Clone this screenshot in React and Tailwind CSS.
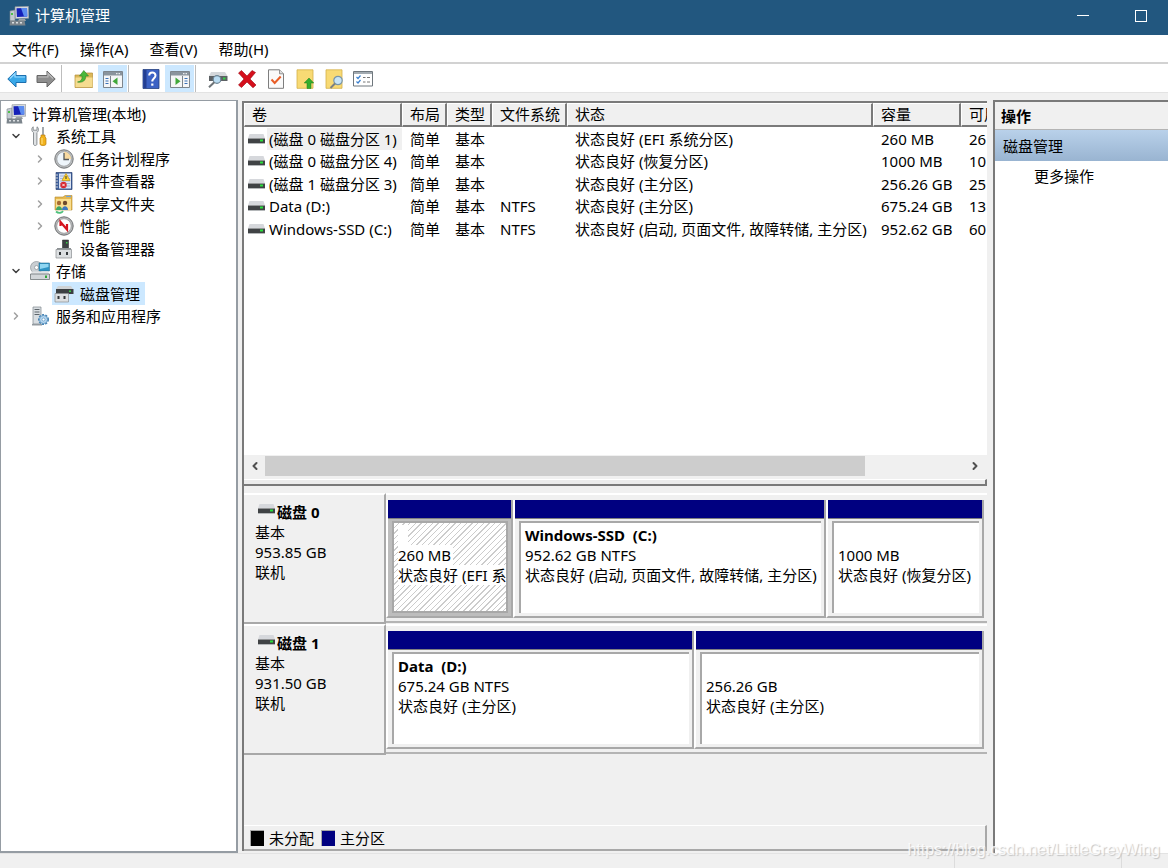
import React from 'react'
import clsx from 'clsx'
import { ChevronDown, ChevronLeft, ChevronRight } from 'lucide-react'

const ComputerIcon = ({ className }) => (
  <svg viewBox="0 0 20 20" className={className} aria-hidden="true">
    <path d="M1 5l5-1v11H1z" fill="#c3cad0" stroke="#7d868e" strokeWidth=".6" />
    <path d="M2 7h2v2H2z" fill="#4dc04a" />
    <path d="M6 0.8l13.5-.6.3 12-13.5.6z" fill="#d5dade" stroke="#848c94" strokeWidth=".6" />
    <path d="M7.5 2.3l10.5-.4.3 8.5-10.4.6z" fill="#1420b8" />
    <path d="M12 2.1l6-.2.3 8.5-3.3.2z" fill="#5b8cf0" />
    <path d="M10 13h6l1 2H9z" fill="#9aa2a8" />
    <path d="M1 14.5h14.5l1 5H.5z" fill="#7c858c" />
    <path d="M3 16h2v1.6H3zM7 16h2v1.6H7zM11 16h2v1.6h-2z" fill="#d9dde0" />
  </svg>
)

const ToolsIcon = ({ className }) => (
  <svg viewBox="0 0 20 20" className={className} aria-hidden="true">
    <path
      d="M3.2.8C1.3 2 1.2 5 3.5 6.6V18c0 2 3.4 2 3.4 0V6.6C9 5 9 2 7 .8V4.2H3.2z"
      fill="#dfe2e4"
      stroke="#80868a"
      strokeWidth=".9"
    />
    <path d="M12 1h2v8h-2z" fill="#a3a8ac" />
    <path d="M11 9h4v2l1 1v6c0 2-6 2-6 0v-6l1-1z" fill="#f2b31c" stroke="#b97d10" strokeWidth=".7" />
    <path d="M12 12v6" stroke="#ffe28a" />
  </svg>
)

const ClockIcon = ({ className }) => (
  <svg viewBox="0 0 20 20" className={className} aria-hidden="true">
    <circle cx="10" cy="10" r="9.2" fill="#b9bcbe" stroke="#77797b" />
    <circle cx="10" cy="10" r="7.2" fill="#eef5fb" stroke="#8d8f91" strokeWidth=".6" />
    <path d="M10 10V2.8A7.2 7.2 0 0 1 17.2 10z" fill="#f7d9a0" />
    <path d="M10 4v6.5h5" fill="none" stroke="#54585b" strokeWidth="1.3" />
  </svg>
)

const EventIcon = ({ className }) => (
  <svg viewBox="0 0 20 20" className={className} aria-hidden="true">
    <path d="M2 1.5h16v17H2z" fill="#3d5f9c" stroke="#2b4272" strokeWidth=".7" />
    <path d="M5 2.5h12v15H5z" fill="#dbe4f4" />
    <path d="M6 5h10M6 7.5h10M6 10h10M6 12.5h10M6 15h10" stroke="#8ea5cf" strokeWidth=".7" />
    <path d="M1 4h3M1 7h3M1 10h3M1 13h3M1 16h3" stroke="#d0d4da" />
    <path d="M12 2.5l4 7H8z" fill="#ffd52d" stroke="#c69410" strokeWidth=".7" />
    <path d="M12 5v3" stroke="#333" />
    <circle cx="9.5" cy="14" r="3.2" fill="#d8262f" />
    <path d="M8.3 12.8l2.4 2.4m0-2.4l-2.4 2.4" stroke="#fff" strokeWidth=".9" />
  </svg>
)

const SharedIcon = ({ className }) => (
  <svg viewBox="0 0 20 20" className={className} aria-hidden="true">
    <path d="M1 3h8l2-1.5h7V16H1z" fill="#e6b84e" stroke="#b48a2f" strokeWidth=".6" />
    <path d="M2 5h15v11H2z" fill="#f9de8f" />
    <path d="M12 2.5h5" stroke="#6ea5dd" strokeWidth="1.2" />
    <circle cx="5" cy="9" r="2.2" fill="#a66b32" />
    <circle cx="11" cy="9" r="2.2" fill="#6d4a2b" />
    <path d="M2 16c0-5 6-5 6 0z" fill="#3fa665" />
    <path d="M8 16c0-5 6-5 6 0z" fill="#3c78c0" />
    <path d="M2 17.5c3 2.5 6 1 7-.5" fill="none" stroke="#4fc07c" strokeWidth="1.8" />
  </svg>
)

const PerformanceIcon = ({ className }) => (
  <svg viewBox="0 0 20 20" className={className} aria-hidden="true">
    <circle cx="10" cy="10" r="9.2" fill="#b5b7b8" stroke="#707274" />
    <circle cx="10" cy="10" r="7.2" fill="#fff" stroke="#8d8f91" strokeWidth=".6" />
    <path d="M6.5 10V6l6.500 7.500V8" fill="none" stroke="#d5141f" strokeWidth="2.2" />
  </svg>
)

const DeviceIcon = ({ className }) => (
  <svg viewBox="0 0 20 20" className={className} aria-hidden="true">
    <path d="M8.5 1h6v9h-6z" fill="#3d4143" stroke="#222" strokeWidth=".5" />
    <path d="M12 3h1.5v1.5H12z" fill="#38d147" />
    <path d="M3 9h14v2H3z" fill="#8d9295" />
    <path d="M2 10.5h15.500V19H2z" fill="#dcdfe1" stroke="#8a8e91" strokeWidth=".7" />
    <path d="M5 13h2v3H5zM12 13h2v3h-2z" fill="#33373a" />
  </svg>
)

const StorageIcon = ({ className }) => (
  <svg viewBox="0 0 20 20" className={className} aria-hidden="true">
    <circle cx="6.5" cy="6.5" r="6" fill="#c9ced2" stroke="#8c9297" strokeWidth=".7" />
    <circle cx="6.5" cy="6.5" r="2" fill="#fff" stroke="#8c9297" strokeWidth=".7" />
    <path d="M9 2h10.500v8H9z" fill="#2e94c4" stroke="#2a6f93" strokeWidth=".6" />
    <path d="M10 3h8.500v3L10 8z" fill="#8fd6f2" />
    <path d="M2 10.500h16l1.500 3H.5z" fill="#e1e4e6" />
    <path d="M.5 13h19v5.500H.5z" fill="#d2d6d9" stroke="#5f6569" strokeWidth=".7" />
    <path d="M15 14.500h2v2.500h-2z" fill="#2fa838" />
  </svg>
)

const DiskMgmtIcon = ({ className }) => (
  <svg viewBox="0 0 20 20" className={className} aria-hidden="true">
    <path d="M4 2h13l2 3H2z" fill="#cfd3d6" />
    <path d="M2 5h17.500v5H2z" fill="#3b3f42" />
    <path d="M15 6.500h2V8h-2z" fill="#38d147" />
    <path d="M1 9.500h13.500v8.500H1z" fill="#dcdfe1" stroke="#8a8e91" strokeWidth=".7" />
    <path d="M3.500 12h2v3h-2zM9.500 12h2v3h-2z" fill="#33373a" />
  </svg>
)

const ServicesIcon = ({ className }) => (
  <svg viewBox="0 0 20 20" className={className} aria-hidden="true">
    <path d="M3 1h8v17H3z" fill="#d9dee2" stroke="#7f878d" strokeWidth=".7" />
    <path d="M4.500 3.500h5M4.500 6h5M4.500 8.500h5" stroke="#5d656b" />
    <path d="M2 18h10v1.500H2z" fill="#949ba0" />
    <circle cx="13.500" cy="13.500" r="4.500" fill="#bcdcf4" stroke="#4683b4" strokeWidth="2" strokeDasharray="2 1.2" />
    <circle cx="13.500" cy="13.500" r="4" fill="#b5d6ef" stroke="#5a92bf" strokeWidth=".7" />
    <circle cx="13.500" cy="13.500" r="1.500" fill="#fff" stroke="#5a92bf" strokeWidth=".7" />
  </svg>
)

const DriveIcon = ({ className }) => (
  <svg viewBox="0 0 17 10" className={className} aria-hidden="true">
    <path d="M1.500 0h14L17 4.500H0z" fill="#d6d8dc" />
    <path d="M0 4.500h17V9H0z" fill="#404345" />
    <path d="M0 9h17v1H0z" fill="#b4b7b9" />
    <path d="M12 5.500h3v2h-3z" fill="#29e03c" />
  </svg>
)

const BackIcon = () => (
  <svg viewBox="0 0 20 20" className="w-5 h-5" aria-hidden="true">
    <path d="M.8 10L9 2v4.500h10v7H9V18z" fill="#39a8e8" stroke="#1d6fae" />
    <path d="M3 9.500L8 4.500V8h10" fill="none" stroke="#9adaff" strokeWidth="1.2" />
  </svg>
)

const ForwardIcon = () => (
  <svg viewBox="0 0 20 20" className="w-5 h-5" aria-hidden="true">
    <path d="M19.200 10L11 2v4.500H1v7h10V18z" fill="#8e8e8e" stroke="#666" />
    <path d="M2 8h10V4.500l5 5" fill="none" stroke="#bdbdbd" strokeWidth="1.2" />
  </svg>
)

const UpFolderIcon = () => (
  <svg viewBox="0 0 20 20" className="w-5 h-5" aria-hidden="true">
    <path d="M1 6h6l2-2h9.500v14.500H1z" fill="#dcb758" stroke="#b48f3a" strokeWidth=".7" />
    <path d="M1.500 8.500h17v9.500h-17z" fill="#f5dc90" />
    <path
      d="M3.500 13c3.500-.5 4.800-2.500 4.600-6H5.500L9.800 1.500 14.500 7h-2.800c.2 4.500-3 7-8.200 6z"
      fill="#49b83a"
      stroke="#2c8423"
      strokeWidth=".6"
    />
  </svg>
)

const PaneIcon = ({ side }) => (
  <svg viewBox="0 0 20 20" className="w-5 h-5" aria-hidden="true">
    <path d="M.5 2.500h19v16H.5z" fill="#f5f6f7" stroke="#7d858c" />
    <path d="M1 3h18v3.500H1z" fill="#8a949d" />
    <path d="M13 4.700h1.500M15.500 4.700H17" stroke="#fff" />
    {side === 'left' ? (
      <>
        <path d="M7.500 7v11" stroke="#7d858c" />
        <path d="M2.500 9.500h3M2.500 12h3M2.500 14.500h3" stroke="#3c72b8" strokeWidth="1.2" />
        <path d="M14.500 8.500v7.500L9.500 12.200z" fill="#41a83a" />
      </>
    ) : (
      <>
        <path d="M12.500 7v11" stroke="#7d858c" />
        <path d="M14.500 9.500h3M14.500 12h3M14.500 14.500h3" stroke="#3c72b8" strokeWidth="1.2" />
        <path d="M5.500 8.500v7.500l5-3.800z" fill="#41a83a" />
      </>
    )}
  </svg>
)

const HelpIcon = () => (
  <svg viewBox="0 0 20 20" className="w-5 h-5" aria-hidden="true">
    <path d="M2 .5h16v19H2z" fill="#3c62c4" stroke="#24407f" strokeWidth=".8" />
    <path d="M2.500 1h3v18h-3z" fill="#243f92" />
    <path d="M8.200 6.500c0-4 6.300-4 6.300 0 0 2.500-3.200 3-3.200 6" fill="none" stroke="#fff" strokeWidth="2" />
    <path d="M10.200 14.500h2.200v2.200h-2.200z" fill="#fff" />
  </svg>
)

const DriveSearchIcon = () => (
  <svg viewBox="0 0 20 20" className="w-5 h-5" aria-hidden="true">
    <path d="M3 3h14l2.500 4H1z" fill="#d4d7da" />
    <path d="M1 7h18.500v5H1z" fill="#5d6164" />
    <path d="M15 8.500h2.500v2H15z" fill="#35d346" />
    <circle cx="9" cy="10.500" r="3.800" fill="#b9dcf2" stroke="#6d8595" strokeWidth="1.2" />
    <path d="M6.300 13.200L1 18.200" stroke="#6e7478" strokeWidth="2" />
  </svg>
)

const DeleteIcon = () => (
  <svg viewBox="0 0 20 20" className="w-5 h-5" aria-hidden="true">
    <path
      d="M1.500 4L4.500 1.500 10 7l5-5.500 3.500 2L13 10l6 6-3 2.800L10 13l-5.500 5.500L1.500 16 7 10z"
      fill="#d50f1c"
      stroke="#9c0812"
      strokeWidth=".6"
    />
  </svg>
)

const CheckPageIcon = () => (
  <svg viewBox="0 0 20 20" className="w-5 h-5" aria-hidden="true">
    <path d="M2.500.8h11l4 4v14.500h-15z" fill="#fafafa" stroke="#7e7e7e" />
    <path d="M13.500.8v4h4" fill="#ddd" stroke="#7e7e7e" strokeWidth=".8" />
    <path d="M5.500 10.500l3.200 3.500 6-6.500" fill="none" stroke="#e85d27" strokeWidth="2" />
  </svg>
)

const PageUpIcon = () => (
  <svg viewBox="0 0 20 20" className="w-5 h-5" aria-hidden="true">
    <path d="M2 .8h16v18.500H2z" fill="#f8da74" stroke="#d3b04a" strokeWidth=".8" />
    <path d="M14 9l4.800 5H16v5.500h-4V14H9.200z" fill="#34ad2c" stroke="#1f7f1b" strokeWidth=".5" />
  </svg>
)

const PageSearchIcon = () => (
  <svg viewBox="0 0 20 20" className="w-5 h-5" aria-hidden="true">
    <path d="M2 .8h16v18.500H2z" fill="#f8da74" stroke="#d3b04a" strokeWidth=".8" />
    <circle cx="14" cy="11.500" r="4.200" fill="#c8e4f5" stroke="#7895a8" strokeWidth="1.2" />
    <path d="M11 14.500L6.500 19" stroke="#7b7f82" strokeWidth="2" />
  </svg>
)

const ChecklistIcon = () => (
  <svg viewBox="0 0 20 20" className="w-5 h-5" aria-hidden="true">
    <path d="M.5 2.500h19v14.500H.5z" fill="#fff" stroke="#6f777d" />
    <path d="M1 3h18v2H1z" fill="#a3abb1" />
    <path d="M3.500 8l1.500 1.500L7.500 6.500M3.500 12.500L5 14l2.500-3" fill="none" stroke="#3a80cf" strokeWidth="1.2" />
    <path d="M10 8.500h2.500M14 8.500h3M10 13h2.500M14 13h3" stroke="#777" />
  </svg>
)

const menus = ['文件(F)', '操作(A)', '查看(V)', '帮助(H)']

const toolbar = [
  [
    { label: '后退', icon: <BackIcon /> },
    { label: '前进', icon: <ForwardIcon /> }
  ],
  [
    { label: '向上', icon: <UpFolderIcon /> },
    { label: '控制台树', icon: <PaneIcon side="left" />, pressed: true }
  ],
  [
    { label: '帮助', icon: <HelpIcon /> },
    { label: '操作窗格', icon: <PaneIcon side="right" />, pressed: true }
  ],
  [
    { label: '重新扫描', icon: <DriveSearchIcon /> },
    { label: '删除', icon: <DeleteIcon /> },
    { label: '属性', icon: <CheckPageIcon /> },
    { label: '打开', icon: <PageUpIcon /> },
    { label: '浏览', icon: <PageSearchIcon /> },
    { label: '设置', icon: <ChecklistIcon /> }
  ]
]

const tree = [
  { label: '计算机管理(本地)', icon: ComputerIcon, level: 0 },
  { label: '系统工具', icon: ToolsIcon, level: 1, state: 'open' },
  { label: '任务计划程序', icon: ClockIcon, level: 2, state: 'closed' },
  { label: '事件查看器', icon: EventIcon, level: 2, state: 'closed' },
  { label: '共享文件夹', icon: SharedIcon, level: 2, state: 'closed' },
  { label: '性能', icon: PerformanceIcon, level: 2, state: 'closed' },
  { label: '设备管理器', icon: DeviceIcon, level: 2 },
  { label: '存储', icon: StorageIcon, level: 1, state: 'open' },
  { label: '磁盘管理', icon: DiskMgmtIcon, level: 2, selected: true },
  { label: '服务和应用程序', icon: ServicesIcon, level: 1, state: 'closed' }
]

const columns = [
  { label: '卷', width: 'w-[158px]' },
  { label: '布局', width: 'w-[45px]' },
  { label: '类型', width: 'w-[45px]' },
  { label: '文件系统', width: 'w-[75px]' },
  { label: '状态', width: 'w-[306px]' },
  { label: '容量', width: 'w-[88px]' },
  { label: '可用', width: '' }
]

const volumes = [
  { name: '(磁盘 0 磁盘分区 1)', fs: '', status: '状态良好 (EFI 系统分区)', size: '260 MB', free: '26', selected: true },
  { name: '(磁盘 0 磁盘分区 4)', fs: '', status: '状态良好 (恢复分区)', size: '1000 MB', free: '10' },
  { name: '(磁盘 1 磁盘分区 3)', fs: '', status: '状态良好 (主分区)', size: '256.26 GB', free: '25' },
  { name: 'Data (D:)', fs: 'NTFS', status: '状态良好 (主分区)', size: '675.24 GB', free: '13' },
  { name: 'Windows-SSD (C:)', fs: 'NTFS', status: '状态良好 (启动, 页面文件, 故障转储, 主分区)', size: '952.62 GB', free: '60' }
]

const disks = [
  {
    name: '磁盘 0',
    size: '953.85 GB',
    partitions: [
      { title: '', size: '260 MB', status: '状态良好 (EFI 系', grow: 'flex-[123]', selected: true },
      { title: 'Windows-SSD\u00a0 (C:)', size: '952.62 GB NTFS', status: '状态良好 (启动, 页面文件, 故障转储, 主分区)', grow: 'flex-[309]' },
      { title: '', size: '1000 MB', status: '状态良好 (恢复分区)', grow: 'flex-[154]' }
    ]
  },
  {
    name: '磁盘 1',
    size: '931.50 GB',
    partitions: [
      { title: 'Data\u00a0 (D:)', size: '675.24 GB NTFS', status: '状态良好 (主分区)', grow: 'flex-[304]' },
      { title: '', size: '256.26 GB', status: '状态良好 (主分区)', grow: 'flex-[286]' }
    ]
  }
]

const TitleBar = () => (
  <header className="flex items-center h-[35px] pl-[9px] bg-[#22577f] text-white">
    <ComputerIcon className="w-5 h-5 mb-1" />
    <h1 className="flex-1 pl-[6px] pb-[5px]">计算机管理</h1>
    <div className="flex gap-1 pb-1">
      <button aria-label="最小化" className="flex items-center justify-center w-[54px] h-7">
        <span className="w-3 h-px bg-white" />
      </button>
      <button aria-label="最大化" className="flex items-center justify-center w-[54px] h-7">
        <span className="w-3 h-3 border border-white" />
      </button>
    </div>
  </header>
)

const MenuBar = () => (
  <nav className="flex items-center gap-[21px] h-[29px] pl-3 bg-white border-b-2 border-[#d2d2d2]">
    {menus.map(label => (
      <button key={label}>{label}</button>
    ))}
  </nav>
)

const Toolbar = () => (
  <div className="flex h-[29px] pt-px pl-[2px] bg-white border-b border-[#e3e3e3]">
    {toolbar.map((group, i) => (
      <div key={i} className="flex">
        {i > 0 && <span className="w-px ml-px mr-[7px] bg-[#bdbdbd]" />}
        {group.map(({ label, icon, pressed }) => (
          <button
            key={label}
            aria-label={label}
            className={clsx('flex items-center justify-center w-[29px]', pressed && 'bg-[#cce8ff]')}
          >
            {icon}
          </button>
        ))}
      </div>
    ))}
  </div>
)

const indents = ['pl-[3px]', 'pl-[9px]', 'pl-[33px]']

const TreeItem = ({ label, icon: Icon, level, state, selected }) => (
  <li className={clsx('flex items-center gap-[6px] h-[23px] even:h-[22px]', indents[level])}>
    {level > 0 && (
      <span className="flex justify-center w-3">
        {state === 'open' && <ChevronDown className="w-3 h-3 text-[#404040]" strokeWidth={3} />}
        {state === 'closed' && <ChevronRight className="w-3 h-3 text-[#a0a0a0]" strokeWidth={3} />}
      </span>
    )}
    <button className={clsx('flex items-center gap-[6px] h-full pl-[2px] pr-[5px]', selected && 'bg-[#cce8ff]')}>
      <Icon className="w-5 h-5" />
      {label}
    </button>
  </li>
)

const VolumeTable = () => (
  <table className="w-full table-fixed border-separate border-spacing-0 whitespace-nowrap text-left">
    <thead>
      <tr className="bg-[#f0f0f0]">
        {columns.map(({ label, width }) => (
          <th
            key={label}
            className={clsx(
              'p-0 pl-[7px] pb-px overflow-hidden font-normal leading-5 border-t border-t-white border-l border-l-white border-b-2 border-b-[#7a7a7a] border-r-2 border-r-[#7a7a7a] last:border-r-0',
              width
            )}
          >
            {label}
          </th>
        ))}
      </tr>
    </thead>
    <tbody>
      {volumes.map(v => (
        <tr key={v.name} className="h-[23px] even:h-[22px]">
          <td className="p-0 pl-1">
            <div className="flex items-center gap-[2px]">
              <DriveIcon className="w-[17px] h-[10px]" />
              <span className={clsx('flex-1 pl-[2px]', v.selected && 'bg-[#f0f0f0]')}>{v.name}</span>
            </div>
          </td>
          <td className="p-0 pl-2">简单</td>
          <td className="p-0 pl-2">基本</td>
          <td className="p-0 pl-2">{v.fs}</td>
          <td className="p-0 pl-2">{v.status}</td>
          <td className="p-0 pl-2">{v.size}</td>
          <td className="p-0 pl-2 overflow-hidden">{v.free}</td>
        </tr>
      ))}
    </tbody>
  </table>
)

const ScrollBar = () => (
  <div className="flex items-center h-[21px] bg-[#f0f0f0]">
    <button aria-label="向左滚动" className="flex items-center justify-center w-[21px] h-full">
      <ChevronLeft className="w-3 h-3 text-[#505050]" strokeWidth={4} />
    </button>
    <div className="flex flex-1 h-5">
      <div className="w-[86%] bg-[#cdcdcd]" />
    </div>
    <button aria-label="向右滚动" className="flex items-center justify-center w-6 h-full">
      <ChevronRight className="w-3 h-3 text-[#505050]" strokeWidth={4} />
    </button>
  </div>
)

const Partition = ({ title, size, status, grow, selected }) => {
  const line = clsx('w-fit', selected && 'pr-[2px] bg-white')

  return (
    <div
      className={clsx(
        'flex flex-col min-w-0 border-l-2 border-l-white border-r-2 border-r-[#a8a8a8] border-b-2 border-b-[#a8a8a8]',
        grow
      )}
    >
      <div className="h-[19px] bg-[#000080] border-b border-[#808080]" />
      <div className={clsx('flex flex-1 pt-[2px] pl-1 pr-[3px] pb-[3px]', selected ? 'bg-[#bdbdbd]' : 'bg-[#f0f0f0]')}>
        <div
          className={clsx(
            'flex-1 min-w-0 overflow-hidden pt-[2px] pl-1 leading-5 whitespace-nowrap border-t-2 border-l-2 border-[#a8a8a8]',
            selected
              ? 'border-r-2 border-b-2 bg-[repeating-linear-gradient(135deg,#ffffff_0px,#ffffff_3px,#cccccc_3px,#cccccc_4px)]'
              : 'bg-white'
          )}
        >
          <p className={clsx(line, 'font-bold')}>{title || '\u00a0\u00a0'}</p>
          <p className={line}>{size}</p>
          <p className={line}>{status}</p>
        </div>
      </div>
    </div>
  )
}

const DiskRow = ({ name, size, partitions }) => (
  <div className="flex h-[131px]">
    <div className="w-[142px] pt-[7px] pl-[11px] leading-5 border-t-2 border-t-white border-r-2 border-r-[#a8a8a8] border-b-2 border-b-[#a8a8a8]">
      <h2 className="flex gap-[2px] pl-[3px] font-bold">
        <DriveIcon className="w-[17px] h-[10px] mt-[2px]" />
        {name}
      </h2>
      <p>基本</p>
      <p>{size}</p>
      <p>联机</p>
    </div>
    <div className="flex flex-1 min-w-0 mb-px pt-[5px] pr-[3px] pb-[3px] border-t-2 border-t-white border-b-2 border-b-[#b4b4b4]">
      {partitions.map(p => (
        <Partition key={p.size} {...p} />
      ))}
    </div>
  </div>
)

const ActionsPane = () => (
  <aside className="w-[175px] bg-white border-t-2 border-l-2 border-[#7a7a7a]">
    <h2 className="h-7 pl-[6px] pt-[2px] font-bold leading-6 bg-[#f0f0f0] border-b border-[#b4b4b4]">操作</h2>
    <div className="flex items-center h-[31px] pl-2 bg-linear-to-b from-[#b9d1ea] to-[#99b4d1]">磁盘管理</div>
    <button className="pl-[39px] pt-1">更多操作</button>
  </aside>
)

export default function App() {
  return (
    <div className="relative flex flex-col min-h-screen bg-[#f0f0f0] text-black text-[15px] leading-[22px] font-['Noto_Sans','Noto_Sans_CJK_SC',sans-serif]">
      <TitleBar />
      <MenuBar />
      <Toolbar />

      <main className="flex flex-1 pt-[7px]">
        <nav className="w-[238px] pt-px bg-white border border-r-2 border-b-2 border-[#959ca3]">
          <ul>
            {tree.map(item => (
              <TreeItem key={item.label} {...item} />
            ))}
          </ul>
        </nav>

        <section className="flex flex-col flex-1 min-w-0 ml-1 mr-[6px] mt-px mb-[2px] border-l-2 border-t-2 border-[#7a7a7a]">
          <div className="flex flex-col bg-white">
            <div className="min-h-[352px]">
              <VolumeTable />
            </div>
            <ScrollBar />
            <div className="pt-[3px] bg-[#f0f0f0]">
              <div className="h-[7px] bg-[#ececec] border-t border-t-white border-r-2 border-b-2 border-[#7a7a7a]" />
            </div>
          </div>

          <div className="flex flex-col flex-1 pt-[7px]">
            {disks.map(disk => (
              <DiskRow key={disk.name} {...disk} />
            ))}
          </div>

          <footer className="flex items-center gap-[5px] h-[26px] pl-[6px] border-t border-t-white border-r-2 border-r-[#a8a8a8] border-b-2 border-b-[#a8a8a8]">
            <span className="w-[14px] h-4 bg-black border-t border-l border-[#a8a8a8]" />
            <span>未分配</span>
            <span className="w-[14px] h-4 ml-[2px] bg-[#000080] border-t border-l border-[#a8a8a8]" />
            <span>主分区</span>
          </footer>
        </section>

        <ActionsPane />
      </main>

      <div className="flex h-[15px] border-t border-[#e3e3e3]">
        <div className="flex-1" />
        <div className="w-[167px] border-l border-[#dcdcdc]" />
        <div className="w-[47px] border-l border-[#dcdcdc]" />
      </div>

      <p className="absolute right-2 bottom-2 font-['Liberation_Sans',sans-serif] text-base leading-5 text-white/80 [text-shadow:1px_1px_1px_#c4c4c4]">
        https://blog.csdn.net/LittleGreyWing
      </p>
    </div>
  )
}
